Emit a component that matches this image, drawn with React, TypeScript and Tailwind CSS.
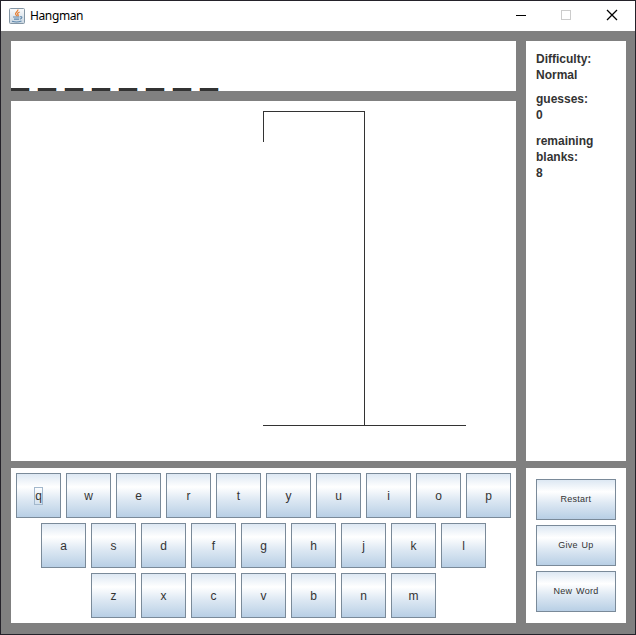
import React from "react";

const KEY_ROWS = ["qwertyuiop", "asdfghjkl", "zxcvbnm"];
const ACTIONS = ["Restart", "Give Up", "New Word"];
const WORD_LENGTH = 8;

const METAL =
  "border border-[#7a8a99] bg-[linear-gradient(#dde8f3_0%,#ffffff_30%,#dde8f3_60%,#b8cfe5_100%)] text-[#333333] flex items-center justify-center";

function JavaIcon() {
  return (
    <svg width="16" height="16" viewBox="0 0 16 16" fill="none">
      <defs>
        <linearGradient id="tile" x1="0" y1="0" x2="0" y2="1">
          <stop offset="0" stopColor="#fafbfc" />
          <stop offset="1" stopColor="#c9d6e1" />
        </linearGradient>
      </defs>
      <rect x=".5" y=".5" width="15" height="15" rx="1" fill="url(#tile)" stroke="#8496a5" />
      <path d="M8.800 1.500c.8 2.200-3.300 3-2.100 4.900L8 8.200M10.700 4c-2.400.9-2.600 1.900-1.500 2.900.3.500 0 1-.6 1.500" stroke="#e5823a" strokeWidth="1.300" />
      <path d="M4 9h6.500M5 11.100h5M3 13.300c2.500.8 7 .8 9.500-.2M11 8.800c2.700-.5 2.400 1.500-.2 2.300" stroke="#5d86ab" strokeWidth="1.100" />
    </svg>
  );
}

function TitleBar() {
  return (
    <header className="flex h-[30px] items-center bg-white pl-2">
      <JavaIcon />
      <h1 className="ml-[5px] flex-1 font-['Noto_Sans',sans-serif] text-[12px] leading-[16px] tracking-[-0.38px] text-black">Hangman</h1>
      <svg width="120" height="30" viewBox="0 0 120 30" fill="none" shapeRendering="crispEdges">
        <path d="M1 14.500h10" stroke="#000" />
        <rect x="46.500" y="9.500" width="9" height="9" stroke="#cccccc" />
        <path d="M92 9l10 10M102 9l-10 10" stroke="#000" strokeWidth="1.300" shapeRendering="auto" />
      </svg>
    </header>
  );
}

function Gallows() {
  return (
    <svg className="block" width="505" height="360" fill="none" stroke="#333333" shapeRendering="crispEdges">
      <path d="M252.500 41V10.500H353.500V324M252 324.500H455" />
    </svg>
  );
}

export default function App() {
  return (
    <div className="flex h-[635px] w-[636px] flex-col border border-[#24222a] bg-[#808080] font-['Liberation_Sans',sans-serif]">
      <TitleBar />
      <main className="grid flex-1 grid-cols-[505px_100px] grid-rows-[420px_155px] gap-x-[10px] gap-y-[7px] pl-[10px] pt-[10px]">
        <div className="flex flex-col gap-[10px]">
          <section className="flex h-[50px] items-end gap-[7px] bg-white">
            {Array.from({ length: WORD_LENGTH }, (_, i) => (
              <span
                key={i}
                className="h-[3px] w-[20px] border-x border-l-[#ffc58c] border-r-[#8cc8f8] bg-[#333333] first:w-[19px] first:border-l-0"
              />
            ))}
          </section>
          <section className="h-[360px] bg-white">
            <Gallows />
          </section>
        </div>
        <aside className="flex flex-col bg-white px-[10px] pt-[10px] text-[12px] font-bold leading-[16px] text-[#333333]">
          <p>Difficulty:<br />Normal</p>
          <p className="mt-2">guesses:<br />0</p>
          <p className="mt-[10px]">remaining<br />blanks:<br />8</p>
        </aside>
        <section className="flex flex-col items-center gap-[5px] bg-white pt-[5px]">
          {KEY_ROWS.map((row) => (
            <div key={row} className="flex w-[495px] gap-[5px] nth-2:pl-[25px] nth-3:pl-[75px]">
              {row.split("").map((letter) => (
                <button key={letter} className={`h-[45px] w-[45px] text-[12px] leading-[16px] ${METAL}`}>
                  {letter === "q" ? (
                    <span className="flex h-[18px] w-[9px] items-center justify-center border border-[#a3b8cc]">q</span>
                  ) : (
                    letter
                  )}
                </button>
              ))}
            </div>
          ))}
        </section>
        <section className="flex flex-col items-center gap-[5px] bg-white pt-[11px]">
          {ACTIONS.map((label) => (
            <button
              key={label}
              className={`h-[41px] w-[80px] pb-px text-[9px] leading-[12px] tracking-[0.25px] [word-spacing:1px] ${METAL}`}
            >
              {label}
            </button>
          ))}
        </section>
      </main>
    </div>
  );
}
